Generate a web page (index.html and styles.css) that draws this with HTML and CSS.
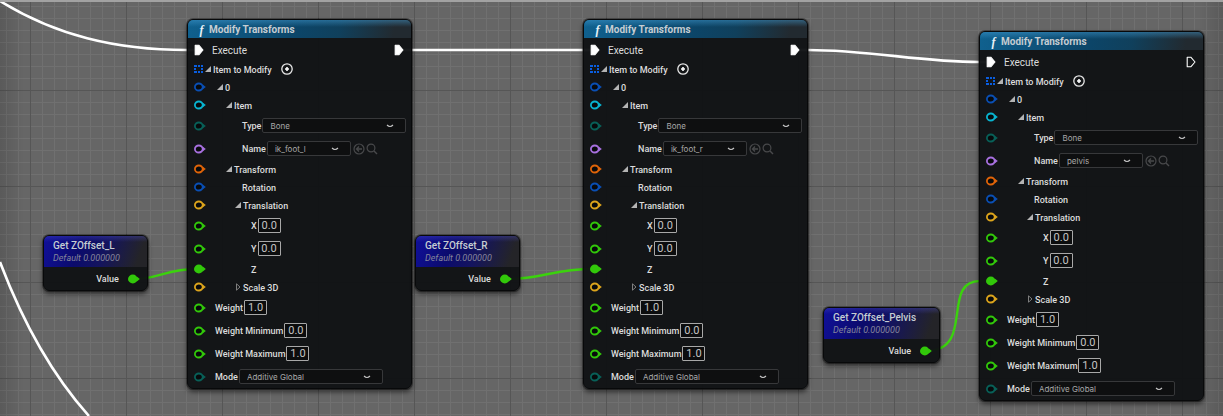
FILE: index.html
```html
<!DOCTYPE html>
<html lang="en">
<head>
<meta charset="utf-8">
<title>Control Rig Graph</title>
<link rel="stylesheet" href="styles.css">
</head>
<body>
<svg class="defs" aria-hidden="true">
  <symbol id="pin" viewBox="0 0 12 10"><ellipse cx="4.8" cy="5" rx="3.9" ry="3.5" fill="#080a0c" stroke="currentColor" stroke-width="1.8"/><path d="M8.6 2.4 11.8 5 8.6 7.6Z" fill="currentColor"/></symbol>
  <symbol id="pin-on" viewBox="0 0 12 10"><ellipse cx="4.8" cy="5" rx="4.8" ry="4.4" fill="currentColor"/><path d="M8.8 2.4 11.8 5 8.8 7.6Z" fill="currentColor"/></symbol>
  <symbol id="exec" viewBox="0 0 10 12"><path d="M1.2 1.2H4.8L9 6 4.8 10.8H1.2Z" stroke="#fff" stroke-width="1.1" stroke-linejoin="round"/></symbol>
  <symbol id="array" viewBox="0 0 12 10"><path d="M0 1h3v2H0zM4 1h2v2H4zM7 1h2v2H7zM0 4h2v2H0zM7 4h2v2H7zM0 7h3v2H0zM4 7h2v2H4zM7 7h2v2H7z" fill="currentColor"/></symbol>
  <symbol id="open" viewBox="0 0 6 6"><path d="M6 0V6H0Z" fill="#b4b4b4"/></symbol>
  <symbol id="closed" viewBox="0 0 6 8"><path d="M1.5.8 5 4 1.5 7.2Z" fill="none" stroke="#8a8a8a" stroke-width=".9"/></symbol>
  <symbol id="add" viewBox="0 0 12 12"><circle cx="6" cy="6" r="5.2" fill="none" stroke="#e8e8e8" stroke-width="1.3"/><path d="M6 4v4M4 6h4" stroke="#fff" stroke-width="1.6"/></symbol>
  <symbol id="chevron" viewBox="0 0 8 4"><path d="M1 1Q4 4 7 1" fill="none" stroke="#c8c8c8" stroke-width="1.1"/></symbol>
  <symbol id="use" viewBox="0 0 12 12"><circle cx="6" cy="6" r="5" fill="none" stroke="#48494b" stroke-width="1.2"/><path d="M9 6H3.5M6 3.5 3.5 6 6 8.5" fill="none" stroke="#48494b" stroke-width="1.3"/></symbol>
  <symbol id="find" viewBox="0 0 12 12"><circle cx="5" cy="5" r="3.9" fill="none" stroke="#48494b" stroke-width="1.2"/><path d="M8 8 11 11" stroke="#48494b" stroke-width="1.4"/></symbol>
</svg>
<main class="graph" id="graph">
  <svg class="wires" aria-hidden="true">
    <g class="wire-exec">
      <path d="M0 1C55 35 115 50 187 50H196"/>
      <path d="M0 262Q36 357 89 416"/>
      <path d="M400 50H592"/>
      <path d="M796 50H808C870 50 920 62 979 62H988"/>
    </g>
    <g class="wire-float">
      <path d="M134 279C160 279 165 269 198 269"/>
      <path d="M506 279C545 279 550 269 594 269"/>
      <path d="M926 351C976 351 940 281 980 281H990"/>
    </g>
  </svg>
</main>
<script src="graph.js"></script>
</body>
</html>
```
FILE: styles.css
```css
* { box-sizing: border-box; }

body {
  margin: 0;
  background: #666;
  color: #dcdcdc;
  font: 500 9px/12px Roboto, sans-serif;
}

.defs { position: absolute; width: 0; height: 0; }

.graph {
  position: relative;
  min-height: 100vh;
  overflow: hidden;
  border-top: 2px solid #a2a2a2;
  background:
    linear-gradient(90deg, rgba(0, 0, 0, .12), transparent 24px, transparent calc(100% - 24px), rgba(0, 0, 0, .12)),
    linear-gradient(90deg, #565656 1px, transparent 1px) 30px 0 / 96px 96px,
    linear-gradient(#565656 1px, transparent 1px) 0 88px / 96px 96px,
    linear-gradient(90deg, #707070 1px, transparent 1px) 6px 0 / 12px 12px,
    linear-gradient(#707070 1px, transparent 1px) 0 4px / 12px 12px,
    #666;
}

.wires {
  position: absolute;
  top: -2px;
  left: 0;
  width: 100%;
  height: 100%;
  overflow: visible;
  fill: none;
}
.wire-exec { stroke: #fff; stroke-width: 2.6; }
.wire-float { stroke: #3bd20d; stroke-width: 2.4; }

.node {
  position: absolute;
  border: 1px solid #08090a;
  border-radius: 6px;
  background: rgba(16, 18, 20, .96);
  box-shadow: 0 0 0 1px rgba(0, 0, 0, .35), 0 3px 5px rgba(0, 0, 0, .55);
}
.node-rig { width: 225px; }

.node-head {
  display: flex;
  align-items: center;
  height: 18px;
  padding: 1px 0 0 6px;
  border-radius: 5px 5px 0 0;
  background:
    linear-gradient(rgba(70, 160, 215, .45), transparent 7px),
    linear-gradient(100deg, #10618f, #0c4568 50%, #10405c 68%, #222a30 92%);
}
.glyph {
  width: 15px;
  font: italic bold 12px/14px "Liberation Serif", serif;
  color: #e8f2f8;
  text-align: center;
}
.title { margin: 0; font-weight: 700; font-size: 10px; line-height: 14px; color: #c6cdd2; }

.rows { padding-top: 3px; }
.row { display: flex; align-items: center; height: 18px; padding: 0 7px 0 6px; }
.row.field { height: 23px; }
.row.exec-row { margin-bottom: 1px; }
.row svg, .row button { flex: none; display: block; }
.pin { width: 12px; height: 10px; margin-right: -1px; }
.exec { width: 10px; height: 12px; margin-right: 1px; }
.exec-out { margin: 0 0 0 auto; }
.label { white-space: nowrap; }
.row:not(.field) .label { padding-top: 1px; }
.fold, .icon { padding: 0; border: 0; background: none; }
.fold { width: 6px; margin-right: 2px; }
.fold svg { width: 6px; height: 6px; }
.fold svg.closed { height: 8px; }
.icon svg { width: 12px; height: 12px; }
.icon + .icon { margin-left: 1px; }
.add { margin-left: 9px; }

.in-exec { margin-left: 7px; font-size: 10px; font-weight: 400; }
.in-0 { margin-left: 0; }
.in-1 { margin-left: 12px; }
.in-2 { margin-left: 21px; }
.in-3 { margin-left: 30px; }
.in-root { margin-left: 10px; }
.in-leaf { margin-left: 37px; }
.in-axis { margin-left: 46px; }

.number {
  width: 23px;
  height: 15px;
  margin-left: 1px;
  padding: 0;
  border: 1px solid #a8a8a8;
  border-radius: 1px;
  background: #0c0d0e;
  color: #c4c4c4;
  font: 400 11px/13px Roboto, sans-serif;
  text-align: center;
}

.choice { position: relative; flex: none; width: 144px; margin-left: 1px; }
.choice.short { width: 84px; margin-right: 2px; }
.choice select {
  display: block;
  width: 100%;
  height: 15px;
  padding: 0 20px 0 7px;
  border: 1px solid #37383a;
  border-radius: 2px;
  background: #0e0f10;
  color: #a8a8a8;
  font: 400 8px/12px Inter, sans-serif;
  appearance: none;
}
.choice svg { position: absolute; top: 6px; right: 12px; width: 8px; height: 4px; pointer-events: none; }

.node-var .node-head {
  display: block;
  height: 31px;
  padding: 3px 23px 0 9px;
  background:
    linear-gradient(rgba(90, 90, 220, .3), transparent 6px),
    linear-gradient(110deg, #10109a, #0b0b6c 35%, #14145e 58%, #242428 90%);
}
.node-var .title { line-height: 13px; font-weight: 500; white-space: nowrap; }
.note { margin: 0; padding-right: 4px; font-style: italic; font-weight: 400; line-height: 13px; color: #85859c; }
.node-var .row { justify-content: flex-end; height: 23px; padding-right: 7px; }
.node-var .pin { margin: 0 0 0 9px; }

.blue { color: #0a4fb4; }
.bright { color: #0a5ee0; }
.cyan { color: #08b4d0; }
.teal { color: #086058; }
.violet { color: #a870e0; }
.orange { color: #e06408; }
.yellow { color: #dca41c; }
.green { color: #32c80a; }
```
FILE: graph.js
```javascript
const icon = (name, cls = "") => `<svg class="${cls}" aria-hidden="true"><use href="#${name}"/></svg>`;
const pin = (color, name = "pin") => icon(name, `pin ${color}`);

const fold = (color, indent, text, state = "open", extra = "", shape = "pin") =>
  `<div class="row">${pin(color, shape)}<button class="fold ${indent}" aria-label="Toggle ${text}">${icon(state, state)}</button><span class="label">${text}</span>${extra}</div>`;

const plain = (color, indent, text, shape = "pin") =>
  `<div class="row">${pin(color, shape)}<span class="label ${indent}">${text}</span></div>`;

const field = (color, indent, text, id, control) =>
  `<div class="row field">${pin(color)}<label class="label ${indent}" for="${id}">${text}</label>${control}</div>`;

const number = (id, value) => `<input class="number" type="text" id="${id}" value="${value}">`;
const choice = (id, value, cls = "") =>
  `<div class="choice ${cls}"><select id="${id}"><option>${value}</option></select>${icon("chevron")}</div>`;

function rigNode({ key, x, y, bone, linked }) {
  const id = (name) => `${key}-${name}`;
  return `<section class="node node-rig" style="left:${x}px;top:${y}px">
    <header class="node-head"><span class="glyph">f</span><h2 class="title">Modify Transforms</h2></header>
    <div class="rows">
      <div class="row exec-row"><svg class="exec" fill="#fff" aria-hidden="true"><use href="#exec"/></svg><span class="label in-exec">Execute</span><svg class="exec exec-out" fill="${linked ? "#fff" : "none"}" aria-hidden="true"><use href="#exec"/></svg></div>
      ${fold("bright", "in-0", "Item to Modify", "open", `<button class="icon add" aria-label="Add item">${icon("add")}</button>`, "array")}
      ${fold("blue", "in-1", "0")}
      ${fold("cyan", "in-2", "Item")}
      ${field("teal", "in-leaf", "Type", id("type"), choice(id("type"), "Bone"))}
      ${field("violet", "in-leaf", "Name", id("name"), choice(id("name"), bone, "short") +
        `<button class="icon" aria-label="Use selected">${icon("use")}</button><button class="icon" aria-label="Find">${icon("find")}</button>`)}
      ${fold("orange", "in-2", "Transform")}
      ${plain("blue", "in-leaf", "Rotation")}
      ${fold("yellow", "in-3", "Translation")}
      ${field("green", "in-axis", "X", id("x"), number(id("x"), "0.0"))}
      ${field("green", "in-axis", "Y", id("y"), number(id("y"), "0.0"))}
      ${plain("green", "in-axis", "Z", "pin-on")}
      ${fold("yellow", "in-3", "Scale 3D", "closed")}
      ${field("green", "in-root", "Weight", id("weight"), number(id("weight"), "1.0"))}
      ${field("green", "in-root", "Weight Minimum", id("min"), number(id("min"), "0.0"))}
      ${field("green", "in-root", "Weight Maximum", id("max"), number(id("max"), "1.0"))}
      ${field("teal", "in-root", "Mode", id("mode"), choice(id("mode"), "Additive Global"))}
    </div>
  </section>`;
}

const varNode = ({ x, y, name }) => `<section class="node node-var" style="left:${x}px;top:${y}px">
    <header class="node-head"><h2 class="title">Get ${name}</h2><p class="note">Default 0.000000</p></header>
    <div class="row"><span class="label">Value</span>${pin("green", "pin-on")}</div>
  </section>`;

const rigNodes = [
  { key: "left", x: 187, y: 17, bone: "ik_foot_l", linked: true },
  { key: "right", x: 583, y: 17, bone: "ik_foot_r", linked: true },
  { key: "pelvis", x: 979, y: 29, bone: "pelvis", linked: false },
];
const varNodes = [
  { x: 43, y: 233, name: "ZOffset_L" },
  { x: 415, y: 233, name: "ZOffset_R" },
  { x: 823, y: 305, name: "ZOffset_Pelvis" },
];

document.getElementById("graph").insertAdjacentHTML(
  "beforeend",
  rigNodes.map(rigNode).join("") + varNodes.map(varNode).join("")
);
```
